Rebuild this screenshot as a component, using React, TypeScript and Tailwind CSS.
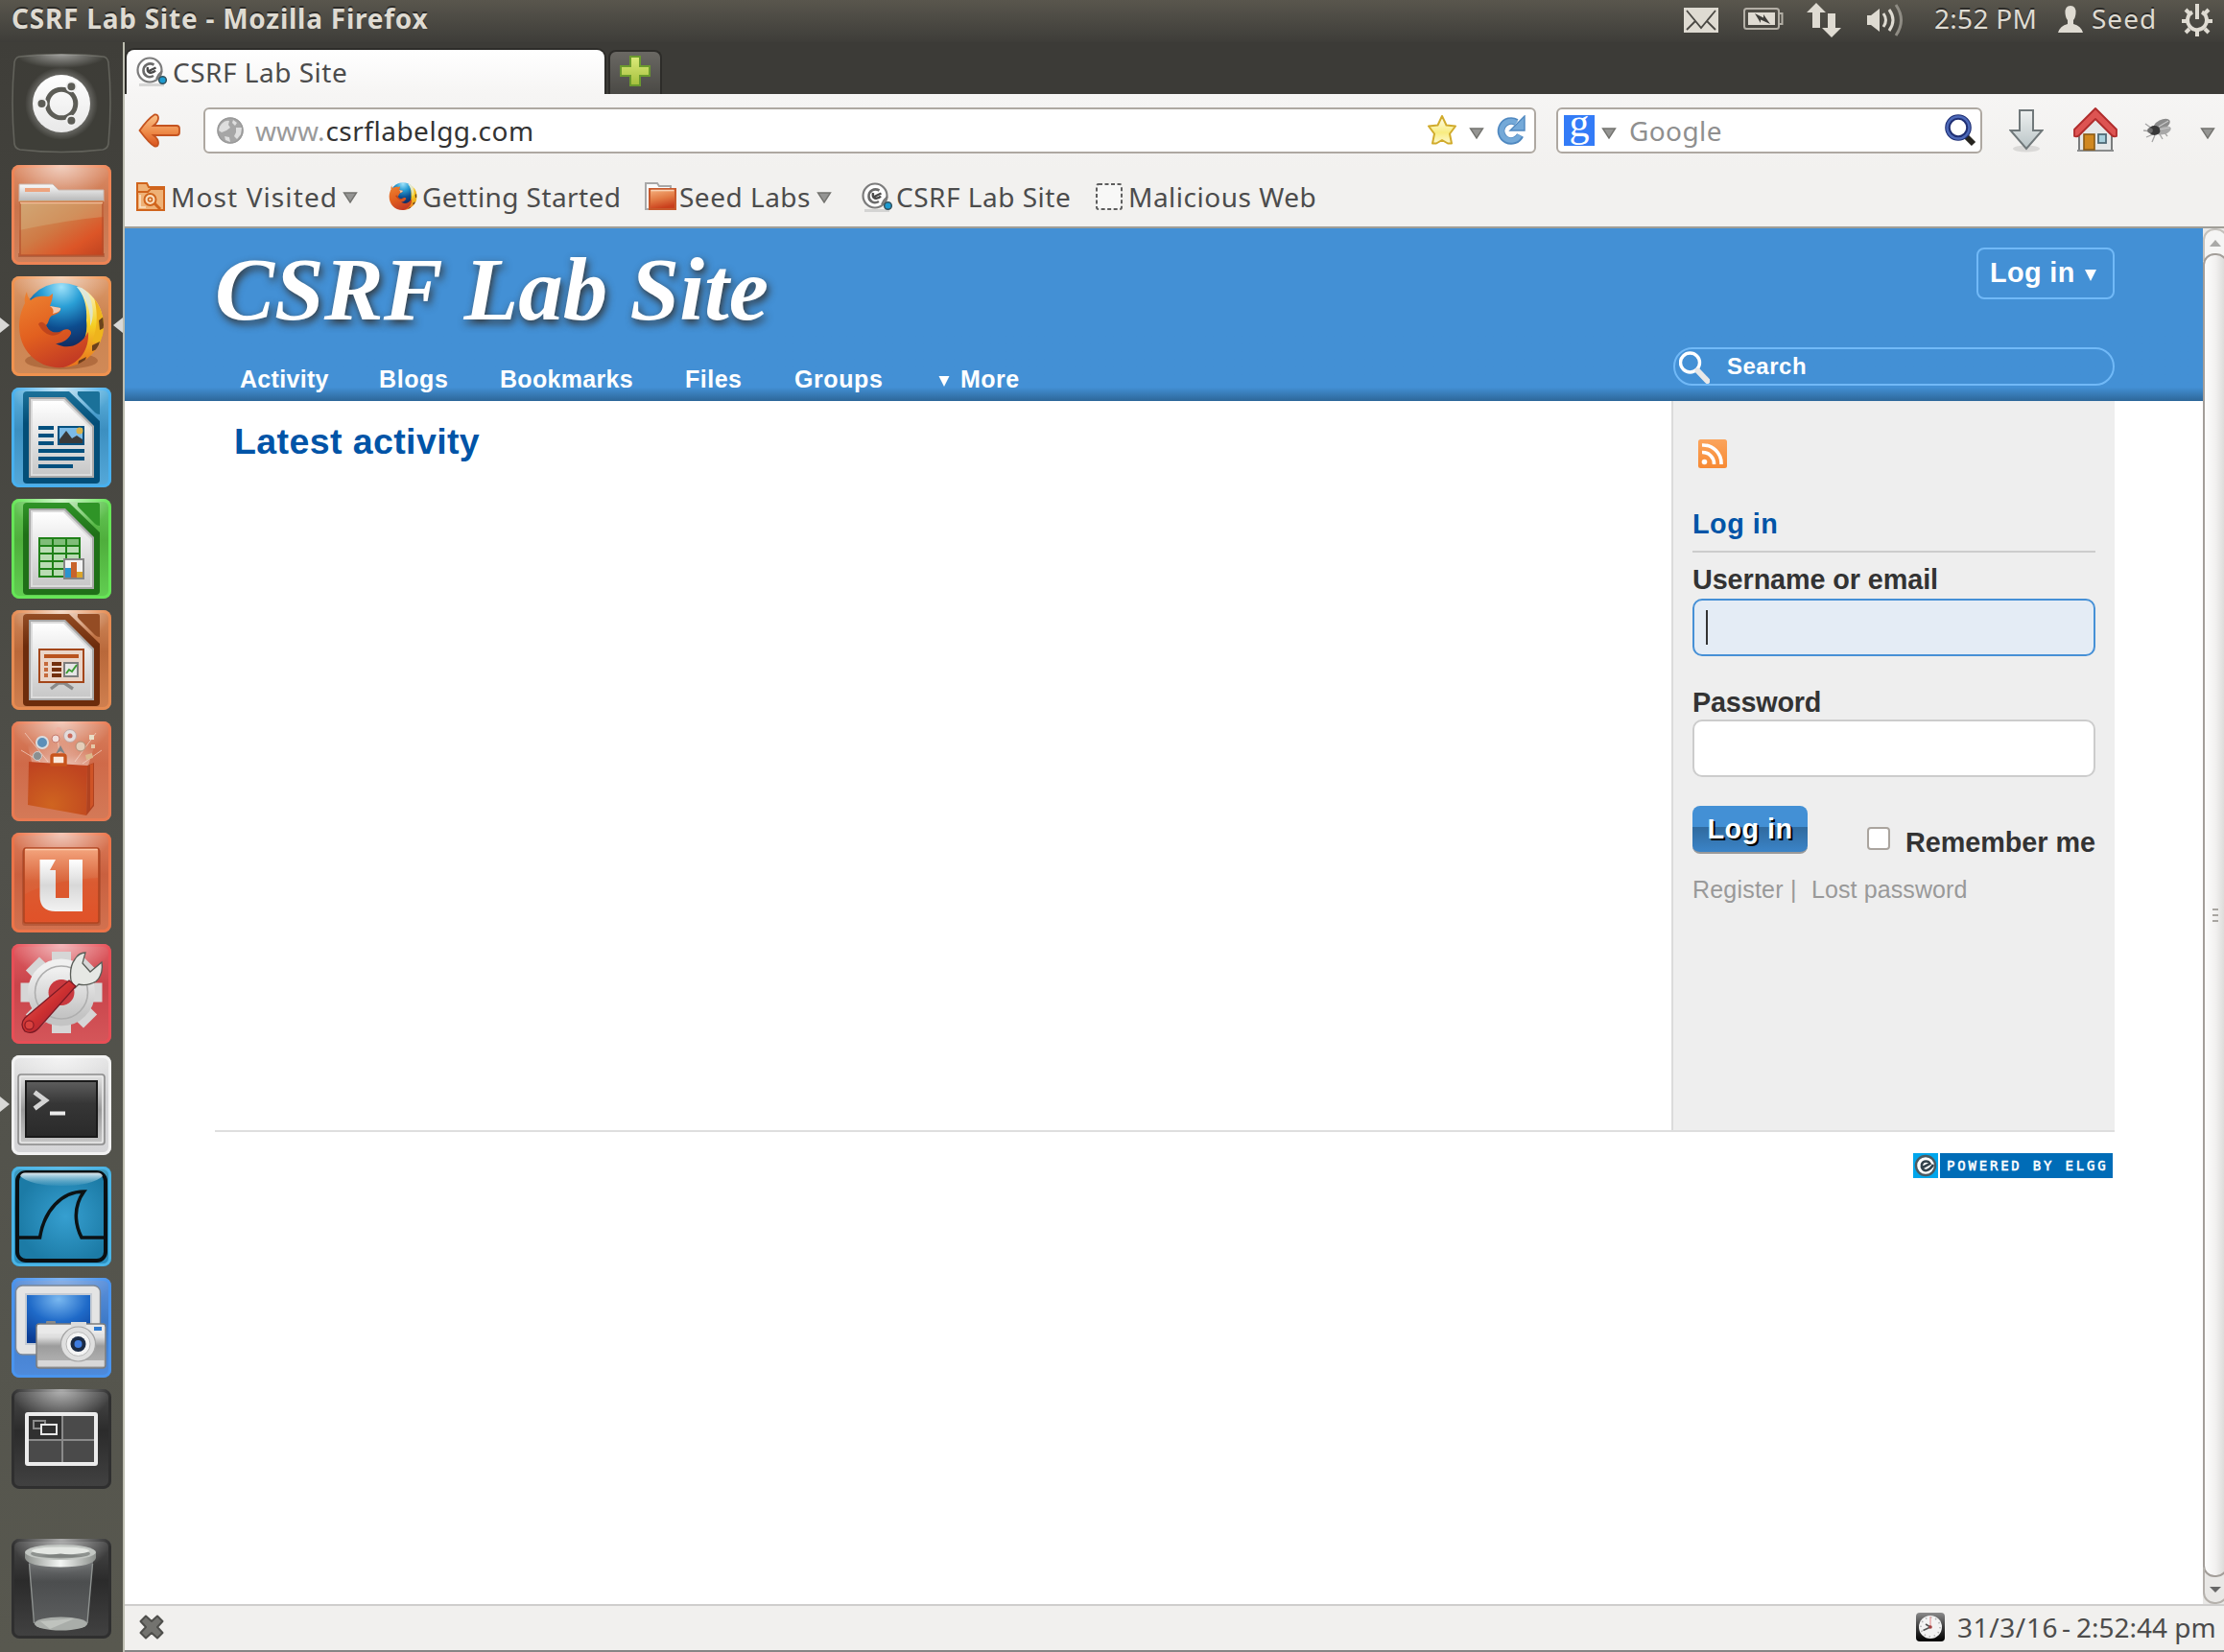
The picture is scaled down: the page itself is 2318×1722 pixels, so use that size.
import React from "react";

/* ---------- launcher tiles ---------- */

function Tile({
  id,
  top,
  mid,
  bottom,
  edge,
  shine = 0.6,
  children,
}: {
  id: string;
  top: string;
  mid: string;
  bottom: string;
  edge: string;
  shine?: number;
  children?: React.ReactNode;
}) {
  return (
    <svg viewBox="0 0 104 104" className="block h-[104px] w-[104px]">
      <defs>
        <linearGradient id={id + "-base"} x1="0" y1="0" x2="0" y2="1">
          <stop offset="0" stopColor={top} />
          <stop offset="0.42" stopColor={mid} />
          <stop offset="1" stopColor={bottom} />
        </linearGradient>
        <radialGradient id={id + "-shine"} cx="0.5" cy="0" r="0.5" gradientTransform="translate(0 0) scale(1 0.7)">
          <stop offset="0" stopColor="#fff" stopOpacity={shine} />
          <stop offset="1" stopColor="#fff" stopOpacity="0" />
        </radialGradient>
      </defs>
      <rect width="104" height="104" rx="8" fill={`url(#${id}-base)`} />
      <rect x="1.5" y="1.5" width="101" height="101" rx="7" fill="none" stroke={edge} strokeWidth="3" />
      <rect width="104" height="104" rx="8" fill={`url(#${id}-shine)`} />
      {children}
    </svg>
  );
}

function DashTile() {
  return (
    <svg viewBox="0 0 104 104" className="block h-[104px] w-[104px]">
      <defs>
        <radialGradient id="dashs" cx="0.5" cy="0" r="0.5" gradientTransform="scale(1 0.8)">
          <stop offset="0" stopColor="#fff" stopOpacity="0.5" />
          <stop offset="1" stopColor="#fff" stopOpacity="0" />
        </radialGradient>
        <radialGradient id="dashg" cx="0.5" cy="0.5" r="0.5">
          <stop offset="0.6" stopColor="#fff" stopOpacity="0.4" />
          <stop offset="1" stopColor="#fff" stopOpacity="0" />
        </radialGradient>
        <linearGradient id="dashd" x1="0" y1="0" x2="0" y2="1">
          <stop offset="0" stopColor="#ffffff" />
          <stop offset="1" stopColor="#e8e8e8" />
        </linearGradient>
      </defs>
      <path
        d="M8 3 Q52 -2 96 3 Q100 4 101 9 Q105 50 101 94 Q100 99 95 100 Q52 105 9 100 Q4 99 3 94 Q-1 50 3 9 Q4 4 8 3Z"
        fill="#3c3c37"
        fillOpacity="0.55"
        stroke="#62625b"
        strokeWidth="1.6"
      />
      <path d="M8 3 Q52 -2 96 3 Q100 4 100 30 Q52 44 4 30 Q4 4 8 3Z" fill="url(#dashs)" />
      <circle cx="52" cy="52" r="38" fill="url(#dashg)" />
      <circle cx="52" cy="52" r="30" fill="url(#dashd)" />
      <circle cx="52" cy="52" r="14.800" fill="none" stroke="#5c5c56" strokeWidth="5" />
      <g fill="#5c5c56" stroke="#efefef" strokeWidth="2">
        <circle cx="31.500" cy="52" r="5" />
        <circle cx="62.400" cy="34.200" r="5" />
        <circle cx="62.400" cy="69.800" r="5" />
      </g>
    </svg>
  );
}

function FilesTile() {
  return (
    <Tile id="files" top="#dd8d68" mid="#c9744c" bottom="#cf815c" edge="#ee8455">
      <defs>
        <linearGradient id="filesfront" x1="0" y1="0" x2="1" y2="1">
          <stop offset="0" stopColor="#cf9a68" />
          <stop offset="0.45" stopColor="#cf7a45" />
          <stop offset="0.75" stopColor="#dc5527" />
          <stop offset="1" stopColor="#bf4320" />
        </linearGradient>
        <linearGradient id="filestab" x1="0" y1="0" x2="0" y2="1">
          <stop offset="0" stopColor="#fafafa" />
          <stop offset="1" stopColor="#b5b5b5" />
        </linearGradient>
      </defs>
      <path d="M8 20 H43 L49 26 H96 V38 H8Z" fill="url(#filestab)" stroke="#c8b8b0" strokeWidth="1" />
      <rect x="14" y="24" width="26" height="4" fill="#eea37d" />
      <rect x="7" y="92" width="90" height="4" fill="#8c3a1c" opacity="0.4" />
      <rect x="8" y="37" width="88" height="57" fill="url(#filesfront)" />
      <path d="M8 37 H96 V54 Q60 57 8 68Z" fill="#d8c090" opacity="0.32" />
      <path d="M9 94 V39 H95 V94Z" fill="none" stroke="#b5502c" strokeWidth="1.6" opacity="0.8" />
      <path d="M9 39.500 H95" stroke="#f3bd96" strokeWidth="1.4" />
    </Tile>
  );
}

function FirefoxArt({ p }: { p: string }) {
  return (
    <g>
      <defs>
        <radialGradient id={p + "g"} cx="0.5" cy="0.05" r="0.85">
          <stop offset="0" stopColor="#9fe2fa" />
          <stop offset="0.3" stopColor="#2a9fd6" />
          <stop offset="0.62" stopColor="#0d4d8f" />
          <stop offset="1" stopColor="#14204f" />
        </radialGradient>
        <linearGradient id={p + "f"} x1="0.2" y1="0" x2="0.6" y2="1">
          <stop offset="0" stopColor="#ec8030" />
          <stop offset="0.5" stopColor="#e2601f" />
          <stop offset="1" stopColor="#c23a24" />
        </linearGradient>
        <linearGradient id={p + "y"} x1="0" y1="0" x2="0" y2="1">
          <stop offset="0" stopColor="#fdf6cc" />
          <stop offset="0.45" stopColor="#f5d024" />
          <stop offset="1" stopColor="#e8681c" />
        </linearGradient>
        <clipPath id={p + "c"}>
          <circle cx="52" cy="51" r="44" />
        </clipPath>
      </defs>
      <circle cx="52" cy="48" r="41" fill={`url(#${p}g)`} />
      <g clipPath={`url(#${p}c)`}>
        <path d="M68 11 C76 20 79 32 78 46 C80 62 74 76 58 84 L50 98 H98 V16 Z" fill={`url(#${p}y)`} />
        <path d="M68 11 C78 22 83 36 82 52 C86 44 86 30 80 18 L74 12Z" fill="#d7e6e4" opacity="0.8" />
        <path d="M86 22 C90 38 90 52 84 68 L98 72 V22Z" fill="#eeb41c" />
        <path d="M91 46 l5 -4 v12 l-4 2Z M84 72 l8 -4 l-2 8 l-6 2Z M70 88 l8 -4 l-2 6 l-7 3Z" fill="#54301c" opacity="0.85" />
      </g>
      <path
        d="M16 16 C16 20 18 23 20 25 C26 19 36 21 39 21 L43 18 C43 24 41 28 40 31 L51 33 C52 36 49 39 42 41 C38 44 39 49 36 51 C40 60 48 60 54 56 C58 54 63 56 62 60 C58 68 50 70 46 70 C58 77 72 73 80 58 C81 76 72 90 54 95 C28 97 8 78 8 52 C8 42 11 34 14 28 C13 24 14 20 16 16Z"
        fill={`url(#${p}f)`}
      />
      <path d="M40 31 L51 33 C52 36 48 38 43 39 Q45 34 40 31Z" fill="#f0c8b0" />
      <path d="M28 50 C30 46 34 48 36 51 C40 60 48 60 54 56 C46 66 34 62 28 50Z" fill="#a8331c" opacity="0.6" />
    </g>
  );
}

function FirefoxTile() {
  return (
    <Tile id="firefox" top="#dd9a6c" mid="#cb8350" bottom="#d08a58" edge="#f0924f">
      <ellipse cx="52" cy="88" rx="38" ry="9" fill="#7a3a14" opacity="0.35" />
      <FirefoxArt p="fl" />
    </Tile>
  );
}

function DocTile({
  id,
  top,
  mid,
  bottom,
  edge,
  dark,
  darker,
  children,
}: {
  id: string;
  top: string;
  mid: string;
  bottom: string;
  edge: string;
  dark: string;
  darker: string;
  children: React.ReactNode;
}) {
  return (
    <Tile id={id} top={top} mid={mid} bottom={bottom} edge={edge} shine={0.7}>
      <defs>
        <linearGradient id={id + "-page"} x1="0" y1="0" x2="0" y2="1">
          <stop offset="0" stopColor="#ffffff" />
          <stop offset="1" stopColor="#c8c8c8" />
        </linearGradient>
        <linearGradient id={id + "-dark"} x1="0" y1="0" x2="0" y2="1">
          <stop offset="0" stopColor={dark} />
          <stop offset="0.35" stopColor={darker} />
          <stop offset="1" stopColor={darker} />
        </linearGradient>
      </defs>
      <path d="M16 4 H60 L92 35 V96 Q92 100 88 100 H16 Q12 100 12 96 V8 Q12 4 16 4Z" fill={`url(#${id}-dark)`} />
      <path d="M69 4 H90 Q92 4 92 6 V28 Q89 28 87 26 L70 9 Q68 7 69 4Z" fill={dark} />
      <path d="M18 10 H56 L86 40 V94 H18Z" fill="#a9a9a9" />
      <path d="M20 12 H55 L84 41 V92 H20Z" fill="#dcdcdc" />
      <path d="M22 14 H54 L82 42 V90 H22Z" fill={`url(#${id}-page)`} />
      {children}
    </Tile>
  );
}

function WriterTile() {
  return (
    <DocTile id="writer" top="#5fb4e0" mid="#3c8fc0" bottom="#55a9da" edge="#48b0ee" dark="#1b7199" darker="#034e78">
      <g fill="#04507e">
        <rect x="28" y="40" width="16" height="4" />
        <rect x="28" y="48" width="16" height="4" />
        <rect x="28" y="56" width="16" height="4" />
        <rect x="28" y="64" width="48" height="4" />
        <rect x="28" y="72" width="48" height="4" />
        <rect x="28" y="80" width="36" height="4" />
        <rect x="48" y="40" width="28" height="20" />
      </g>
      <rect x="50" y="42" width="24" height="16" fill="#7cbbe6" />
      <circle cx="71" cy="45" r="3.500" fill="#d9b24a" />
      <path d="M50 58 V54 L57 45 L63 53 L68 50 L74 54 V58Z" fill="#3a3a3a" />
    </DocTile>
  );
}

function CalcTile() {
  return (
    <DocTile id="calc" top="#66c858" mid="#4fae3c" bottom="#62cf52" edge="#66e557" dark="#2f9427" darker="#1f7018">
      <rect x="28" y="40" width="44" height="42" fill="#b9dcb3" />
      <rect x="28" y="40" width="44" height="9" fill="#7fbd78" />
      <path d="M29 41H71V81H29Z M29 49H71 M29 57H71 M29 65H71 M29 73H71 M43 41V81 M57 41V81" fill="none" stroke="#1f8018" strokeWidth="2" />
      <rect x="55" y="63" width="20" height="20" fill="#f2f2f2" stroke="#858585" strokeWidth="2" />
      <rect x="56" y="72" width="6" height="10" fill="#2a93d0" />
      <rect x="62" y="66" width="6" height="16" fill="#c8642c" />
      <rect x="68" y="76" width="6" height="6" fill="#dba52a" />
    </DocTile>
  );
}

function ImpressTile() {
  return (
    <DocTile id="impress" top="#d08a5c" mid="#b9683a" bottom="#d08050" edge="#e58b52" dark="#944c24" darker="#6d2c0c">
      <path d="M41 82 L49 76 H55 L64 82" fill="none" stroke="#8a8a8a" strokeWidth="3.4" />
      <rect x="29" y="41" width="46" height="34" fill="#ead5c8" stroke="#a3461a" strokeWidth="2" />
      <rect x="34" y="46" width="36" height="4" fill="#b9541f" />
      <g fill="#c56a3c">
        <rect x="34" y="54" width="4" height="4" />
        <rect x="34" y="60" width="4" height="4" />
        <rect x="34" y="66" width="4" height="4" />
      </g>
      <g fill="#73300e">
        <rect x="42" y="54" width="10" height="4" />
        <rect x="42" y="60" width="10" height="4" />
        <rect x="42" y="66" width="10" height="4" />
      </g>
      <rect x="55" y="55" width="14" height="14" fill="#e6e6e6" stroke="#7d7d7d" strokeWidth="2" />
      <path d="M57 66 L60 62 L63 64 L68 57" fill="none" stroke="#3a9a30" strokeWidth="2" />
    </DocTile>
  );
}

function SoftwareTile() {
  return (
    <Tile id="software" top="#d9805e" mid="#cf6a49" bottom="#d47a58" edge="#e87a52">
      <defs>
        <radialGradient id="glow" cx="0.5" cy="1" r="0.8">
          <stop offset="0" stopColor="#fff" stopOpacity="0.95" />
          <stop offset="1" stopColor="#fff" stopOpacity="0" />
        </radialGradient>
        <radialGradient id="bag" cx="0.4" cy="0.8" r="0.8">
          <stop offset="0" stopColor="#cf6420" />
          <stop offset="1" stopColor="#bf4420" />
        </radialGradient>
      </defs>
      <path d="M14 14 L90 14 L80 46 L22 46Z" fill="url(#glow)" opacity="0.65" />
      <path d="M14 12 L38 42 M10 30 L30 42 M94 30 L74 44 M88 12 L66 42 M48 16 L50 34" stroke="#fbe5da" strokeWidth="1" opacity="0.6" />
      <circle cx="32" cy="22" r="6" fill="#5b8fb8" stroke="#d8dde0" strokeWidth="2" />
      <circle cx="61" cy="15" r="6.500" fill="#e3dcdc" stroke="#c4a8a4" />
      <circle cx="61" cy="15" r="2.500" fill="#c86a5c" />
      <circle cx="46" cy="18" r="4" fill="#f0dedb" stroke="#c87a6c" />
      <circle cx="49" cy="9" r="3" fill="#eeb0a0" />
      <circle cx="72" cy="26" r="5" fill="#e4cdb8" stroke="#b09078" />
      <circle cx="27" cy="36" r="4.500" fill="#8a8f90" stroke="#cfcfcf" />
      <path d="M46 34 L51 25 L56 34 L51 31Z" fill="#7d8488" />
      <rect x="81" y="14" width="5" height="5" fill="#e8dfc8" />
      <rect x="83" y="24" width="4" height="4" fill="#e5c9a8" />
      <path d="M77 35 l7 -2 l1 5 l-7 2Z" fill="#dcb98c" />
      <path d="M18 42 L79 46 L78 98 L17 87Z" fill="url(#bag)" />
      <path d="M79 46 L86 43 V88 L78 98Z" fill="#b04220" />
      <path d="M82 45 L85 44 V87 L82 91Z" fill="#cf5426" />
      <path d="M42 45 V37 Q42 35 44 35 H54 Q56 35 56 37 V45Z" fill="#fbe9dc" stroke="#c8541c" strokeWidth="3.400" />
    </Tile>
  );
}

function UbuntuOneTile() {
  return (
    <Tile id="one" top="#dc7c5a" mid="#c9603f" bottom="#d27250" edge="#ec7449">
      <defs>
        <linearGradient id="onesq" x1="0" y1="0" x2="0" y2="1">
          <stop offset="0" stopColor="#f4a57e" />
          <stop offset="0.450" stopColor="#d8633a" />
          <stop offset="1" stopColor="#e2542c" />
        </linearGradient>
        <linearGradient id="oneu" x1="0" y1="0" x2="0" y2="1">
          <stop offset="0" stopColor="#ffffff" />
          <stop offset="0.500" stopColor="#d8d8d8" />
          <stop offset="1" stopColor="#f2f2f2" />
        </linearGradient>
      </defs>
      <rect x="11" y="17" width="82" height="80" rx="3" fill="#7a2a10" opacity="0.3" />
      <rect x="13" y="16" width="78" height="78" rx="2" fill="url(#onesq)" stroke="#b04420" strokeWidth="1.600" />
      <path d="M14 64 Q40 50 90 47 V92 H14Z" fill="#e04e22" opacity="0.350" />
      <path d="M14.500 17.500 H89.500" stroke="#fbc8a8" strokeWidth="1.600" />
      <path d="M29.500 28 H46 L40 39 H46 V68 H60 V28 H74 V82 H46 Q29.500 82 29.500 66Z" fill="url(#oneu)" />
    </Tile>
  );
}

function SettingsTile() {
  const teeth = [0, 45, 90, 135, 180, 225, 270, 315];
  return (
    <Tile id="settings" top="#e05c62" mid="#c8444a" bottom="#d5565a" edge="#e84e56">
      <defs>
        <linearGradient id="geargrad" x1="0" y1="0" x2="0" y2="1">
          <stop offset="0" stopColor="#f0f0f0" />
          <stop offset="1" stopColor="#c4c4c4" />
        </linearGradient>
        <linearGradient id="handle" x1="0" y1="0" x2="1" y2="1">
          <stop offset="0" stopColor="#f0685e" />
          <stop offset="0.500" stopColor="#cc2f30" />
          <stop offset="1" stopColor="#8a1a3a" />
        </linearGradient>
      </defs>
      <g fill="#d6d6d6">
        {teeth.map((a) => (
          <path key={a} d="M42 20 V8 H62 V20Z" transform={`rotate(${a} 52 50.500)`} />
        ))}
      </g>
      <circle cx="52" cy="50.500" r="24" fill="none" stroke="url(#geargrad)" strokeWidth="22" />
      <circle cx="52" cy="50.500" r="27.500" fill="none" stroke="#aeaeae" strokeWidth="1.600" />
      <circle cx="52" cy="50.500" r="13.500" fill="#c9393f" />
      <path d="M62 38 Q60 24 66 16 Q70 9 77 9 L74 20 L82 29 L94 19 Q96 32 88 39 Q80 44 70 42 L66 46Z" fill="#e6e8e4" stroke="#5a5e58" strokeWidth="1.300" />
      <path d="M60 38 L67 44 L29 87 Q22 95 14 91 Q8 84 14 77Z" fill="url(#handle)" stroke="#7a1a24" strokeWidth="1.200" />
      <circle cx="18.500" cy="84.500" r="4.600" fill="#d8413e" stroke="#8a1a24" strokeWidth="1.200" />
    </Tile>
  );
}

function TerminalTile() {
  return (
    <Tile id="terminal" top="#e6e6e6" mid="#d2d2d4" bottom="#d6d6d8" edge="#f2f2f2">
      <defs>
        <linearGradient id="bezel" x1="0" y1="0" x2="0" y2="1">
          <stop offset="0" stopColor="#e4e4e4" />
          <stop offset="0.500" stopColor="#9a9a9a" />
          <stop offset="1" stopColor="#c8c8c8" />
        </linearGradient>
        <linearGradient id="screen" x1="0" y1="0" x2="0" y2="1">
          <stop offset="0" stopColor="#5e5e5e" />
          <stop offset="0.400" stopColor="#363636" />
          <stop offset="1" stopColor="#2a2a2a" />
        </linearGradient>
      </defs>
      <rect x="7" y="20" width="90" height="73" rx="3" fill="url(#bezel)" stroke="#8c8c8c" strokeWidth="1.600" />
      <rect x="9" y="22" width="86" height="69" rx="2" fill="none" stroke="#e8e8e8" strokeWidth="1.600" />
      <rect x="15" y="27" width="74" height="58" fill="url(#screen)" stroke="#1a1a1a" strokeWidth="2" />
      <path d="M24 38.500 L35.500 47 L24 55.500" fill="none" stroke="#d4d4d4" strokeWidth="5" />
      <rect x="40" y="58.500" width="16" height="4" fill="#ececec" />
    </Tile>
  );
}

function SharkTile() {
  return (
    <Tile id="shark" top="#3f9cc0" mid="#1d7fa8" bottom="#2b8fc0" edge="#4ab4e6" shine={0.1}>
      <defs>
        <radialGradient id="sea" cx="0.550" cy="0.500" r="0.550">
          <stop offset="0" stopColor="#369fd0" />
          <stop offset="1" stopColor="#1c7ba6" />
        </radialGradient>
        <linearGradient id="seatop" x1="0" y1="0" x2="0" y2="1">
          <stop offset="0" stopColor="#e2eef4" />
          <stop offset="1" stopColor="#6fb4d0" stopOpacity="0.200" />
        </linearGradient>
      </defs>
      <rect x="6" y="6" width="92" height="92" rx="9" fill="url(#sea)" stroke="#0a0f12" strokeWidth="4" />
      <path d="M9 10 Q10 6.500 14 6.500 H90 Q94 6.500 95 10 Q84 20 52 20 Q20 20 9 10Z" fill="url(#seatop)" />
      <path d="M8 74 H29.500 C34 46 52 26 75.500 26 C64 42 66 60 73 74 H96" fill="none" stroke="#0c1214" strokeWidth="3.600" />
    </Tile>
  );
}

function ScreenshotTile() {
  return (
    <Tile id="shot" top="#5f93dc" mid="#3f7bc8" bottom="#4f8bdc" edge="#4a94ee" shine={0.3}>
      <defs>
        <radialGradient id="monitor" cx="0.500" cy="0.100" r="0.900">
          <stop offset="0" stopColor="#7ab8f0" />
          <stop offset="0.500" stopColor="#1f6ac8" />
          <stop offset="1" stopColor="#0a3c94" />
        </radialGradient>
        <linearGradient id="camera" x1="0" y1="0" x2="0" y2="1">
          <stop offset="0" stopColor="#efefef" />
          <stop offset="0.300" stopColor="#dedede" />
          <stop offset="0.500" stopColor="#9c9c9c" />
          <stop offset="1" stopColor="#b8b8b8" />
        </linearGradient>
      </defs>
      <rect x="4.500" y="8" width="88" height="72" rx="7" fill="#e4e4e4" stroke="#7a8696" strokeWidth="1.400" />
      <rect x="15" y="17" width="68" height="52" fill="url(#monitor)" stroke="#c6ccd4" strokeWidth="2" />
      <rect x="36" y="45" width="10" height="4" rx="1" fill="#8a8a8a" />
      <rect x="26" y="48" width="72" height="46" rx="3" fill="url(#camera)" stroke="#7c7c7c" strokeWidth="1.400" />
      <rect x="27.500" y="49" width="69" height="9" fill="#e9e9e9" />
      <rect x="27.500" y="86" width="69" height="6" fill="#d8d8d8" />
      <rect x="62" y="46" width="16" height="5" fill="#dcdcdc" />
      <rect x="86" y="51" width="8" height="4" fill="#2f7ad0" />
      <circle cx="69.500" cy="69" r="18" fill="#dfdfdf" stroke="#a4a4a4" strokeWidth="1.200" />
      <circle cx="69.500" cy="69" r="12.500" fill="#f4f4f4" stroke="#b8b8b8" />
      <circle cx="69.500" cy="69" r="8" fill="#1c2b44" />
      <circle cx="69.500" cy="69" r="4" fill="#3f7ce0" />
    </Tile>
  );
}

function WorkspaceTile() {
  return (
    <Tile id="work" top="#4a4a4a" mid="#2b2b2b" bottom="#424242" edge="#2f2f2f" shine={0.6}>
      <rect x="16" y="26" width="72" height="52" rx="1" fill="#4a4a4a" />
      <rect x="18" y="28" width="34" height="24" fill="#303030" />
      <path d="M53 27 V77 M17 53 H87" stroke="#8a8a8a" strokeWidth="2" />
      <rect x="23" y="33" width="12" height="8" fill="none" stroke="#8a8a8a" strokeWidth="2" />
      <rect x="31" y="37" width="16" height="10" fill="#303030" stroke="#e6e6e6" strokeWidth="2" />
      <rect x="16" y="26" width="72" height="52" rx="1" fill="none" stroke="#ececec" strokeWidth="4" />
    </Tile>
  );
}

function TrashTile() {
  return (
    <Tile id="trash" top="#4a4a4a" mid="#2b2b2b" bottom="#424242" edge="#2f2f2f" shine={0.6}>
      <defs>
        <linearGradient id="can" x1="0" y1="0" x2="0" y2="1">
          <stop offset="0" stopColor="#a0a4a6" stopOpacity="0.550" />
          <stop offset="0.300" stopColor="#6c7072" stopOpacity="0.500" />
          <stop offset="1" stopColor="#84888a" stopOpacity="0.450" />
        </linearGradient>
        <linearGradient id="rim" x1="0" y1="0" x2="1" y2="0">
          <stop offset="0" stopColor="#8c908c" />
          <stop offset="0.500" stopColor="#f4f6f4" />
          <stop offset="1" stopColor="#8c908c" />
        </linearGradient>
      </defs>
      <path d="M18 24 L24 90 Q51 98 79 90 L85 24Z" fill="url(#can)" />
      <path d="M18.500 26 L23.500 88 M84.500 26 L79 88" stroke="#8e9290" strokeWidth="1.400" />
      <ellipse cx="51.500" cy="88.500" rx="27.500" ry="7" fill="#a9ada9" />
      <path d="M30 86 L66 83 L40 94Z" fill="#c9ccc8" opacity="0.700" />
      <path d="M14 14 V20 Q16 29 51 29.500 Q86 29 88 20 V14Z" fill="url(#rim)" />
      <ellipse cx="51" cy="14" rx="37" ry="8" fill="#c2c6c2" />
      <ellipse cx="51" cy="15.500" rx="31" ry="5" fill="#8e928f" />
      <ellipse cx="51" cy="12.500" rx="30" ry="4" fill="#e4e7e3" />
      <path d="M30 18 L51 15.500 L74 18 Q51 21 30 18Z" fill="#7e827f" />
    </Tile>
  );
}

function RunMark() {
  return (
    <svg viewBox="0 0 10 16" className="absolute top-[43px] -left-[12px] h-4 w-[10px]">
      <path d="M0 0 L10 8 L0 16Z" fill="#d8d8d6" />
    </svg>
  );
}

function Launcher() {
  return (
    <aside className="flex w-[130px] shrink-0 flex-col items-start gap-3 border-r-2 border-[#bdbdb0] bg-linear-to-b from-[#3f3e39] via-[#50504a] to-[#58584f] pt-3 pl-3">
      <DashTile />
      <FilesTile />
      <div className="relative">
        <RunMark />
        <FirefoxTile />
        <svg viewBox="0 0 10 16" className="absolute top-[43px] left-[106px] h-4 w-[10px]">
          <path d="M10 0 L0 8 L10 16Z" fill="#d8d8d6" />
        </svg>
      </div>
      <WriterTile />
      <CalcTile />
      <ImpressTile />
      <SoftwareTile />
      <UbuntuOneTile />
      <SettingsTile />
      <div className="relative">
        <RunMark />
        <TerminalTile />
      </div>
      <SharkTile />
      <ScreenshotTile />
      <WorkspaceTile />
      <div className="mt-10">
        <TrashTile />
      </div>
    </aside>
  );
}

/* ---------- small icons ---------- */

function ElggIcon({ className }: { className: string }) {
  return (
    <svg viewBox="0 0 32 32" className={className}>
      <path d="M3 28 h26 v3 h-26Z" fill="#c8c8c8" opacity="0.700" />
      <circle cx="14" cy="14" r="12.500" fill="#fff" stroke="#7c7c7c" strokeWidth="2.200" />
      <path d="M18.500 8.500 C13 5.500 7.500 9 7.500 14.500 C7.500 20 13 23 18 20" fill="none" stroke="#6a6a6a" strokeWidth="2.600" />
      <path d="M12 15.500 L20.500 11.500 M12 11 Q11 15 13.500 16.500 Q17.500 17.500 20 14.500" fill="none" stroke="#4a4a4a" strokeWidth="2.400" />
      <path d="M21 23 Q23 18 27 15" fill="none" stroke="#777" strokeWidth="2" />
      <circle cx="27.500" cy="24.500" r="3.800" fill="#1d9bd0" stroke="#33525e" strokeWidth="1.500" />
    </svg>
  );
}

function Caret({ className }: { className: string }) {
  return (
    <svg viewBox="0 0 16 12" className={"h-3 w-4 shrink-0 " + className}>
      <path d="M1.500 1 H14.500 L8 11Z" fill="#959593" stroke="#73736f" strokeWidth="1.400" />
    </svg>
  );
}

function PlusIcon() {
  return (
    <svg viewBox="0 0 32 32" className="h-8 w-8">
      <defs>
        <linearGradient id="plus" x1="0" y1="0" x2="0" y2="1">
          <stop offset="0" stopColor="#dcea7a" />
          <stop offset="1" stopColor="#a4bf3c" />
        </linearGradient>
      </defs>
      <path d="M11 1 H21 V11 H31 V21 H21 V31 H11 V21 H1 V11 H11Z" fill="url(#plus)" stroke="#6b9a2e" strokeWidth="2" />
    </svg>
  );
}

function BackIcon() {
  return (
    <svg viewBox="0 0 44 36" className="ml-[14px] h-9 w-11 shrink-0">
      <defs>
        <linearGradient id="back" x1="0" y1="0" x2="0" y2="1">
          <stop offset="0" stopColor="#fbc38a" />
          <stop offset="0.550" stopColor="#ee8a48" />
          <stop offset="1" stopColor="#d8521c" />
        </linearGradient>
      </defs>
      <path
        d="M17 1.500 Q21 1 21 5 Q21 9 16 13 H40 Q43 13 43 16 V20 Q43 23 40 23 H16 Q21 27 21 31 Q21 35.500 17 34.500 Q12 32 1.500 18 Q10 6 17 1.500Z"
        fill="url(#back)"
        stroke="#c4531f"
        strokeWidth="1.800"
      />
    </svg>
  );
}

function GlobeIcon() {
  return (
    <svg viewBox="0 0 28 28" className="ml-3 h-7 w-7 shrink-0">
      <circle cx="14" cy="14" r="13.500" fill="#a6a6a6" />
      <path d="M5 7 Q9 3 13 4 L12 8 L14 11 L10 14 L5 16 L2 14 Q2 10 5 7Z M17 3 L21 6 L19 9 L16 6Z M20 11 L26 11 L25 18 L21 23 L18 20 L20 16Z M8 20 L13 21 L14 26 L9 24Z" fill="#dedede" />
      <circle cx="14" cy="14" r="13" fill="none" stroke="#9a9a9a" strokeWidth="1.500" />
    </svg>
  );
}

function StarIcon() {
  return (
    <svg viewBox="0 0 32 32" className="h-8 w-8 shrink-0">
      <defs>
        <linearGradient id="star" x1="0" y1="0" x2="0" y2="1">
          <stop offset="0" stopColor="#fffef4" />
          <stop offset="0.600" stopColor="#f8ec80" />
          <stop offset="1" stopColor="#fdf8cf" />
        </linearGradient>
      </defs>
      <path
        d="M16 1 L20.500 10.500 L30 11.500 L24 19.500 L26 29.500 H22 L16 26 L10 29.500 H6 L8 19.500 L2 11.500 L11.500 10.500Z"
        fill="url(#star)"
        stroke="#d1ab2c"
        strokeWidth="2"
        strokeLinejoin="round"
      />
    </svg>
  );
}

function ReloadIcon() {
  return (
    <svg viewBox="0 0 32 32" className="ml-3 h-8 w-8 shrink-0">
      <path d="M25.500 21 A10.500 10.500 0 1 1 21.500 7.500" fill="none" stroke="#4f88c0" strokeWidth="7.600" />
      <path d="M30 1 V16 H15Z" fill="#74a9d8" stroke="#4f88c0" strokeWidth="1.400" />
      <path d="M24.800 21 A10 10 0 1 1 21.500 8" fill="none" stroke="#74a9d8" strokeWidth="5" />
    </svg>
  );
}

function MagnifierIcon() {
  return (
    <svg viewBox="0 0 34 34" className="mr-1 ml-auto h-[34px] w-[34px] shrink-0">
      <path d="M22 22 L31 31" stroke="#26241f" strokeWidth="6" />
      <circle cx="15" cy="14" r="11" fill="#fff" stroke="#1f2f74" strokeWidth="5.600" />
      <circle cx="15" cy="14" r="11.500" fill="none" stroke="#4d69b8" strokeWidth="2.400" />
    </svg>
  );
}

function DownloadIcon() {
  return (
    <svg viewBox="0 0 36 46" className="h-[46px] w-9 shrink-0">
      <defs>
        <linearGradient id="down" x1="0" y1="0" x2="0" y2="1">
          <stop offset="0" stopColor="#eef0f0" />
          <stop offset="1" stopColor="#b9c4c6" />
        </linearGradient>
      </defs>
      <ellipse cx="18" cy="42" rx="14" ry="3.500" fill="#000" opacity="0.100" />
      <path d="M11 2 H25 V23 H34.500 L18 42 L1.500 23 H11Z" fill="url(#down)" stroke="#70787a" strokeWidth="2" />
    </svg>
  );
}

function HomeIcon() {
  return (
    <svg viewBox="0 0 46 48" className="h-12 w-[46px] shrink-0">
      <path d="M6 22 L23 6 L40 22 V45 H6Z" fill="#e6e8e8" stroke="#7a7c7c" strokeWidth="2" />
      <path d="M4 45 H42" stroke="#8a8c8c" strokeWidth="2" />
      <rect x="11" y="28" width="11" height="16" fill="#d08820" stroke="#8a5a14" strokeWidth="1.600" />
      <rect x="26" y="28" width="8" height="9" fill="#a9d0dc" stroke="#4f6a76" strokeWidth="1.800" />
      <path d="M23 1 L45 23 V30 Q42 31 40 29 L23 12 L6 29 Q4 31 1 30 V23Z" fill="#dd5452" stroke="#b02c2c" strokeWidth="1.800" strokeLinejoin="round" />
    </svg>
  );
}

function BugIcon() {
  return (
    <svg viewBox="0 0 32 28" className="h-7 w-8 shrink-0">
      <path d="M3 7 L10 12 M1 14 L10 15 M4 21 L11 18 M10 26 L13 19 M21 23 L18 18 M26 20 L22 15" stroke="#a4a4a4" strokeWidth="1.300" />
      <ellipse cx="20" cy="8" rx="9.500" ry="5" transform="rotate(-28 20 8)" fill="#8b8b8b" />
      <ellipse cx="22" cy="14" rx="8" ry="4" transform="rotate(-18 22 14)" fill="#a8a8a8" />
      <ellipse cx="12.500" cy="14" rx="6" ry="5" fill="#383838" />
      <circle cx="8" cy="14" r="2.800" fill="#6c6c6c" />
      <path d="M17 10 L27 4 M18 13 L28 11" stroke="#c8c8c8" strokeWidth="1.200" />
    </svg>
  );
}

function SavedSearchIcon() {
  return (
    <svg viewBox="0 0 30 30" className="h-[30px] w-[30px] shrink-0">
      <path d="M1 1 H11 L13 5 H29 V29 H1Z" fill="#efb277" stroke="#d0641c" strokeWidth="2" />
      <path d="M2 10 H12 L15 7 H28" fill="none" stroke="#d0641c" strokeWidth="2" />
      <circle cx="14.500" cy="18" r="6" fill="#f9ddbd" stroke="#d0641c" strokeWidth="2" />
      <circle cx="14.500" cy="18" r="2" fill="none" stroke="#d0641c" strokeWidth="1.600" />
      <path d="M19 22 L25 28" stroke="#d0641c" strokeWidth="3" />
      <path d="M4 13 V26 H10" fill="none" stroke="#fbe3c8" strokeWidth="1.600" />
    </svg>
  );
}

function SmallFolderIcon() {
  return (
    <svg viewBox="0 0 34 30" className="h-[30px] w-[34px] shrink-0">
      <defs>
        <linearGradient id="folder" x1="0" y1="0" x2="0.300" y2="1">
          <stop offset="0" stopColor="#f6b482" />
          <stop offset="0.550" stopColor="#e27a44" />
          <stop offset="1" stopColor="#c93f1c" />
        </linearGradient>
      </defs>
      <path d="M1 1 H13 L15 4 H27 V28 H1Z" fill="#fbfbfb" stroke="#a8a8a8" strokeWidth="2" />
      <rect x="5" y="7" width="27" height="21" fill="url(#folder)" stroke="#c8592c" strokeWidth="2" />
      <path d="M6.500 8.500 H30.500" stroke="#f9d2b4" strokeWidth="1.600" />
    </svg>
  );
}

function ClockIcon() {
  return (
    <svg viewBox="0 0 32 32" className="h-8 w-8 shrink-0">
      <defs>
        <linearGradient id="clock" x1="0" y1="0" x2="0" y2="1">
          <stop offset="0" stopColor="#8c8c8c" />
          <stop offset="0.500" stopColor="#3a3a3a" />
          <stop offset="1" stopColor="#000" />
        </linearGradient>
      </defs>
      <rect x="1" y="1" width="30" height="30" rx="4" fill="url(#clock)" />
      <circle cx="16" cy="16" r="12" fill="#f3f3f3" />
      <circle cx="16" cy="16" r="10" fill="none" stroke="#b4b4b4" strokeWidth="1.600" strokeDasharray="1.500 3.700" />
      <path d="M16 16 V5" stroke="#e6a8a8" strokeWidth="1.500" />
      <path d="M16 16 L8.500 19.500 M16 16 L11 13" stroke="#555" strokeWidth="1.600" />
      <circle cx="16" cy="16" r="1.800" fill="#a04040" />
    </svg>
  );
}

/* ---------- desktop panel ---------- */

function TopPanel() {
  return (
    <header className="flex h-11 shrink-0 items-center bg-linear-to-b from-[#59564d] to-[#3e3d39] pb-[5px] text-[28px] leading-[39px] text-[#dfdbd2] [text-shadow:0_-2px_0_#2c2b28]">
      <h1 className="ml-3 font-bold tracking-[0.76px] whitespace-nowrap">CSRF Lab Site - Mozilla Firefox</h1>
      <div className="ml-auto flex items-center">
        <svg viewBox="0 0 36 26" className="mt-[2px] h-[26px] w-9">
          <rect width="36" height="26" fill="#dfdbd2" />
          <path d="M3 3 L18 21 L33 3 M3 23 L12 14 M33 23 L24 14" fill="none" stroke="#4a4843" strokeWidth="1.800" />
        </svg>
        <svg viewBox="0 0 42 24" className="ml-[26px] h-6 w-[42px]">
          <rect x="1" y="1" width="36" height="21" rx="2.500" fill="none" stroke="#b3afa6" strokeWidth="2" />
          <path d="M38 6 h2.500 v11 h-2.500" fill="none" stroke="#b3afa6" strokeWidth="2" />
          <rect x="5" y="5" width="28" height="13" fill="#dfdbd2" />
          <path d="M12 6 L21 10.500 V7 L28 17 L18 12.500 V16Z" fill="#3e3d39" />
        </svg>
        <svg viewBox="0 0 36 36" className="mt-[3px] ml-6 h-9 w-9">
          <path d="M10 0 L20 10 H14 V26 H6 V10 H0Z" fill="#dfdbd2" />
          <path d="M26 36 L16 26 H22 V11 H30 V26 H36Z" fill="#dfdbd2" />
        </svg>
        <svg viewBox="0 0 40 34" className="mt-[2px] ml-[26px] h-[34px] w-10">
          <path d="M1 12 H5 L14 5 V29 L5 22 H1Z" fill="#dfdbd2" />
          <g fill="none" strokeWidth="3">
            <path d="M18 10 Q23 17 18 24" stroke="#dfdbd2" />
            <path d="M24 6 Q32 17 24 28" stroke="#dfdbd2" />
            <path d="M31 1 Q42 17 31 33" stroke="#8f8c84" />
          </g>
        </svg>
        <span className="ml-[31px] w-[106px] tracking-[0.3px] whitespace-nowrap">2:52 PM</span>
        <svg viewBox="0 0 26 28" className="ml-[23px] h-7 w-[26px]">
          <path d="M13 0 Q19 0 18.500 8 Q18 13 16 15 V19 Q24 21 26 28 H0 Q2 21 10 19 V15 Q8 13 7.500 8 Q7 0 13 0Z" fill="#dfdbd2" />
        </svg>
        <span className="ml-[9px] w-[66px] tracking-[1px] whitespace-nowrap">Seed</span>
        <svg viewBox="0 0 34 34" className="mt-[2px] mr-[11px] ml-[27px] h-[34px] w-[34px]">
          <g fill="none" stroke="#dfdbd2">
            <path d="M12 8.500 A10 10 0 1 0 22 8.500" strokeWidth="4" />
            <path d="M17 0 V16 M17 28 V34 M1 18 H7 M27 18 H33 M5 6 L9 10 M29 6 L25 10 M5 30 L9 26 M29 30 L25 26" strokeWidth="4" />
          </g>
        </svg>
      </div>
    </header>
  );
}

/* ---------- browser chrome ---------- */

function TabStrip() {
  return (
    <div className="flex h-[54px] shrink-0 items-end gap-1 bg-[#3c3b37]">
      <div className="ml-[2px] flex h-[46px] w-[498px] items-center rounded-t-[8px] bg-linear-to-b from-white to-[#f6f5f4] pl-[10px] shadow-[0_0_0_2px_#2d2c29]">
        <ElggIcon className="h-8 w-8" />
        <span className="ml-[6px] text-[28px] leading-[46px] tracking-[0.5px] text-[#4c4c4c]">CSRF Lab Site</span>
      </div>
      <div className="flex h-[46px] w-[56px] justify-center rounded-t-[8px] border-2 border-b-0 border-[#2d2c29] bg-linear-to-b from-[#6a6863] to-[#4a4945] pt-1">
        <PlusIcon />
      </div>
    </div>
  );
}

function NavBar() {
  return (
    <div className="flex h-[76px] shrink-0 items-center bg-linear-to-b from-[#f6f5f4] to-[#f2f1ef]">
      <BackIcon />
      <div className="ml-6 flex h-12 w-[1389px] shrink-0 items-center rounded-[6px] border-2 border-[#aea8a1] bg-white text-[28px] leading-[44px]">
        <GlobeIcon />
        <span className="ml-[12px] text-[#9a9a9a]">www.</span>
        <span className="ml-[1px] tracking-[0.5px] text-[#333]">csrflabelgg.com</span>
        <span className="ml-auto flex items-center pr-2">
          <StarIcon />
          <Caret className="mt-[6px] ml-[12px]" />
          <ReloadIcon />
        </span>
      </div>
      <div className="ml-[21px] flex h-12 w-[444px] shrink-0 items-center rounded-[6px] border-2 border-[#aea8a1] bg-white text-[28px] leading-[44px]">
        <span className="ml-[6px] flex h-8 w-8 items-center justify-center bg-[#337bf7] font-['Liberation_Serif'] text-[42px] leading-none text-white">
          <span className="-mt-[17px]">g</span>
        </span>
        <Caret className="mt-[6px] ml-[7px]" />
        <span className="ml-[13px] tracking-[0.4px] text-[#8f8f8f]">Google</span>
        <MagnifierIcon />
      </div>
      <div className="ml-[28px] flex items-center">
        <DownloadIcon />
        <span className="ml-[31px] flex">
          <HomeIcon />
        </span>
        <span className="ml-[26px] flex">
          <BugIcon />
        </span>
        <Caret className="mt-[6px] ml-[28px]" />
      </div>
    </div>
  );
}

function BookmarksBar() {
  return (
    <div className="flex h-[64px] shrink-0 items-center border-b-2 border-[#a09e97] bg-[#f2f1ef] text-[28px] leading-[40px] whitespace-nowrap text-[#4c4c4c]">
      <div className="ml-3 flex w-[263px] items-center">
        <SavedSearchIcon />
        <span className="ml-[6px] tracking-[1.1px]">Most Visited</span>
        <Caret className="mt-[2px] ml-[5px]" />
      </div>
      <div className="flex w-[267px] items-center">
        <svg viewBox="6 6 92 92" className="h-[30px] w-[30px]">
          <FirefoxArt p="fs" />
        </svg>
        <span className="ml-[5px] tracking-[0.4px]">Getting Started</span>
      </div>
      <div className="flex w-[226px] items-center">
        <SmallFolderIcon />
        <span className="ml-[2px] tracking-[0.5px]">Seed Labs</span>
        <Caret className="mt-[2px] ml-[6px]" />
      </div>
      <div className="flex w-[244px] items-center">
        <ElggIcon className="mt-[2px] h-8 w-8" />
        <span className="ml-[4px] tracking-[0.5px]">CSRF Lab Site</span>
      </div>
      <div className="flex items-center">
        <svg viewBox="0 0 28 28" className="h-7 w-7">
          <rect x="1" y="1" width="26" height="26" rx="2" fill="#f8f8f7" stroke="#5e5e5e" strokeWidth="2" strokeDasharray="4 2.500" />
        </svg>
        <span className="ml-[6px] tracking-[0.5px]">Malicious Web</span>
      </div>
    </div>
  );
}

function Scrollbar() {
  return (
    <div className="flex w-[22px] shrink-0 flex-col items-stretch overflow-hidden bg-[#e9e8e6]">
      <div className="flex h-[34px] w-[26px] shrink-0 justify-center rounded-t-[12px] border-2 border-[#c4c1bc] bg-[#f5f5f4] pt-[10px]">
        <svg viewBox="0 0 12 7" className="h-[7px] w-3">
          <path d="M6 0 L12 7 H0Z" fill="#a9a9a7" />
        </svg>
      </div>
      <div className="-mt-2 flex w-[26px] flex-1 flex-col items-center justify-center gap-1 rounded-[12px] border-2 border-[#a39e99] bg-linear-to-r from-[#fdfdfd] via-[#f2f1f0] to-[#d9d8d6]">
        <span className="h-[2px] w-[6px] bg-[#a8a5a1]" />
        <span className="h-[2px] w-[6px] bg-[#a8a5a1]" />
        <span className="h-[2px] w-[6px] bg-[#a8a5a1]" />
      </div>
      <div className="-mt-[10px] flex h-[38px] w-[26px] shrink-0 items-end justify-center rounded-b-[12px] border-2 border-t-0 border-[#b5b1ac] pb-[10px]">
        <svg viewBox="0 0 12 6" className="h-[6px] w-3">
          <path d="M0 0 H12 L6 6Z" fill="#666" />
        </svg>
      </div>
    </div>
  );
}

function StatusBar() {
  return (
    <footer className="flex h-[50px] shrink-0 items-center border-t-2 border-[#cfcecd] border-b-2 border-b-[#858585] bg-[#f1f0ee] pb-[2px] text-[28px] leading-[44px] whitespace-nowrap text-[#4c4c4c]">
      <svg viewBox="0 0 26 26" className="ml-[15px] h-[26px] w-[26px]">
        <path
          d="M7 1.500 L13 7 L19 1.500 L24.500 7 L19 13 L24.500 19 L19 24.500 L13 19 L7 24.500 L1.500 19 L7 13 L1.500 7Z"
          fill="#73736f"
          stroke="#4e4e4b"
          strokeWidth="2"
          strokeLinejoin="round"
        />
      </svg>
      <div className="ml-auto flex items-center">
        <ClockIcon />
        <span className="ml-3 w-[109px] tracking-[0.6px]">31/3/16</span>
        <span className="w-[15px]">-</span>
        <span className="w-[154px]">2:52:44 pm</span>
      </div>
    </footer>
  );
}

/* ---------- web page ---------- */

function NavLink({ className, children }: { className: string; children: React.ReactNode }) {
  return <a className={"block shrink-0 " + className}>{children}</a>;
}

function SiteHeader() {
  return (
    <div className="flex h-[180px] justify-between bg-linear-to-b from-[#4390d5] from-[92%] to-[#2d6799] pr-[92px] pl-[94px] text-white">
      <div>
        <h2 className="mt-[12px] h-[110px] font-['Liberation_Serif'] text-[93px] leading-[104px] font-bold whitespace-nowrap italic [text-shadow:2px_4px_8px_#333]">
          CSRF Lab Site
        </h2>
        <nav className="mt-[20px] flex pl-[26px] text-[25px] leading-[30px] font-bold tracking-[0.3px] whitespace-nowrap">
          <NavLink className="w-[145px]">Activity</NavLink>
          <NavLink className="w-[126px] tracking-[0.6px]">Blogs</NavLink>
          <NavLink className="w-[193px]">Bookmarks</NavLink>
          <NavLink className="w-[114px] tracking-[0.5px]">Files</NavLink>
          <NavLink className="w-[149px] tracking-[0.6px]">Groups</NavLink>
          <span className="flex items-center">
            <svg viewBox="0 0 12 12" className="mt-[5px] ml-[1px] h-[11px] w-3">
              <path d="M0 0 H12 L6 12Z" fill="#fff" />
            </svg>
            <NavLink className="ml-[11px] tracking-[0.5px]">More</NavLink>
          </span>
        </nav>
      </div>
      <div className="flex w-[460px] flex-col items-end">
        <a className="mt-5 flex h-[54px] w-[144px] items-center rounded-[8px] border-2 border-[#71b9f7] pb-[2px] pl-3 text-[28.8px] leading-[48px] font-bold tracking-[0.4px] whitespace-nowrap">
          Log in
          <svg viewBox="0 0 12 12" className="mt-[6px] ml-[10px] h-3 w-3">
            <path d="M0 0 H12 L6 12Z" fill="#fff" />
          </svg>
        </a>
        <div className="mt-[50px] flex h-10 w-[460px] items-center rounded-full border-2 border-[#71b9f7] pl-1 text-[24px] leading-[36px] font-bold tracking-[0.5px]">
          <svg viewBox="0 0 32 34" className="mt-[2px] h-[34px] w-8">
            <circle cx="11.500" cy="12" r="10" fill="none" stroke="#fff" strokeWidth="3.400" />
            <path d="M19.500 20.500 L29.500 31" stroke="#e8e8e8" strokeWidth="6" strokeLinecap="round" />
          </svg>
          <span className="-mt-[1px] ml-[18px]">Search</span>
        </div>
      </div>
    </div>
  );
}

function LoginSidebar() {
  return (
    <aside className="w-[462px] shrink-0 border-l-2 border-[#dbdbdb] bg-[#eeeeee] pr-5 pl-5 font-bold text-[#333]">
      <svg viewBox="0 0 30 30" className="mt-10 ml-[6px] block h-[30px] w-[30px]">
        <defs>
          <linearGradient id="rss" x1="0" y1="0" x2="0" y2="1">
            <stop offset="0" stopColor="#fba45c" />
            <stop offset="1" stopColor="#f78a34" />
          </linearGradient>
        </defs>
        <rect width="30" height="30" rx="2.500" fill="url(#rss)" />
        <circle cx="6.500" cy="23.500" r="2.800" fill="#fff" />
        <path d="M4 13.500 A12 12 0 0 1 16.500 26 M4 6 A19 19 0 0 1 24 26" fill="none" stroke="#fff" strokeWidth="3.600" />
      </svg>
      <h3 className="mt-[41px] h-[47px] border-b-2 border-[#ccc] text-[28.8px] leading-[35px] tracking-[0.5px] text-[#0054a7]">Log in</h3>
      <label className="mt-[10px] block h-[38px] text-[28.8px] leading-[36px] tracking-[-0.1px] whitespace-nowrap">Username or email</label>
      <div className="flex h-[60px] items-center rounded-[10px] border-2 border-[#4690d6] bg-[#e4ecf5] pl-3">
        <span className="h-9 w-[2px] bg-[#333]" />
      </div>
      <label className="mt-[30px] block h-[36px] text-[28.8px] leading-[36px] tracking-[-0.25px]">Password</label>
      <div className="h-[60px] rounded-[10px] border-2 border-[#ccc] bg-white" />
      <div className="mt-[30px] flex items-start whitespace-nowrap">
        <div className="flex h-[50px] w-[120px] justify-center rounded-[8px] border-b-2 border-[#999] bg-linear-to-b from-[#4390d5] from-[46%] via-[#306a9e] via-[46%] to-[#3b84c8] text-[28.8px] leading-[48px] tracking-[0.4px] text-white [text-shadow:2px_2px_0_#000]">
          Log in
        </div>
        <span className="mt-[22px] ml-[62px] h-6 w-6 rounded-[4px] border-2 border-[#aaa49e] bg-white" />
        <span className="mt-[20px] ml-[16px] text-[28.8px] leading-[36px] tracking-[-0.05px]">Remember me</span>
      </div>
      <div className="mt-[16px] flex text-[25px] leading-[30px] font-normal whitespace-nowrap text-[#999]">
        <span className="w-[102px] tracking-[0.2px]">Register</span>
        <span className="w-[22px]">|</span>
        <span className="tracking-[0.1px]">Lost password</span>
      </div>
    </aside>
  );
}

function ElggBadge() {
  return (
    <div className="mt-[22px] mr-[2px] ml-auto flex h-[26px] w-[208px] gap-[2px]">
      <svg viewBox="0 0 26 26" className="h-[26px] w-[26px]">
        <rect width="26" height="26" fill="#00a6ec" />
        <circle cx="13" cy="13" r="10" fill="#fff" stroke="#4a5a62" strokeWidth="2.400" />
        <path d="M9 15.500 L17.500 11 C16 7.500 10.500 7.500 9 11.500 C8 16 11 18.500 14 18 C16.500 17.500 18.500 16 21 12" fill="none" stroke="#33434b" strokeWidth="2.600" />
      </svg>
      <div className="flex-1 bg-[#006cb7] pl-[7px] font-['DejaVu_Sans_Mono'] text-[14px] leading-[26px] tracking-[2.8px] whitespace-nowrap text-white [-webkit-text-stroke:0.5px_white]">
        POWERED BY ELGG
      </div>
    </div>
  );
}

function WebPage() {
  return (
    <main className="flex-1 bg-white font-['Liberation_Sans']">
      <SiteHeader />
      <div className="mr-[92px] ml-[94px]">
        <div className="flex h-[762px] justify-between border-b-2 border-[#dedede]">
          <h2 className="mt-[19px] ml-5 text-[37.5px] leading-[46px] font-bold tracking-[0.4px] text-[#0054a7]">Latest activity</h2>
          <LoginSidebar />
        </div>
        <ElggBadge />
      </div>
    </main>
  );
}

export default function App() {
  return (
    <div className="flex h-[1722px] w-[2318px] flex-col overflow-hidden bg-white font-['Noto_Sans',sans-serif]">
      <TopPanel />
      <div className="flex min-h-0 flex-1">
        <Launcher />
        <div className="flex min-w-0 flex-1 flex-col">
          <TabStrip />
          <NavBar />
          <BookmarksBar />
          <div className="flex min-h-0 flex-1">
            <WebPage />
            <Scrollbar />
          </div>
          <StatusBar />
        </div>
      </div>
    </div>
  );
}
